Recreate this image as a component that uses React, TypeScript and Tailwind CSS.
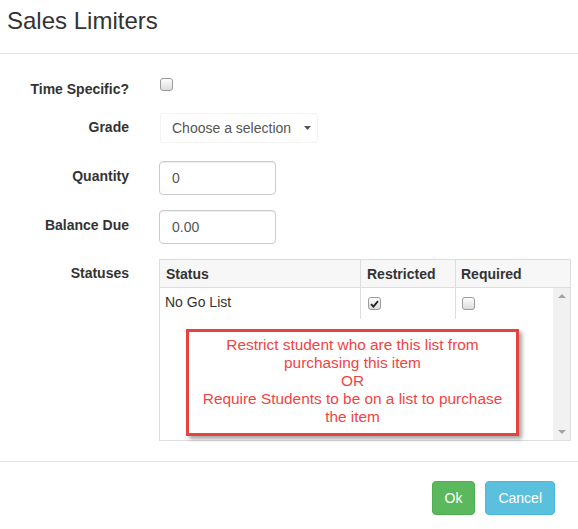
import React from "react";

function Box({ checked = false, className = "" }: { checked?: boolean; className?: string }) {
  return (
    <span
      className={
        "flex h-[13px] w-[13px] items-center justify-center rounded-[3px] border border-[#9a9a9a] bg-gradient-to-b from-[#fdfdfd] to-[#dcdcdc] " +
        className
      }
    >
      {checked && (
        <svg width="9" height="8" viewBox="0 0 9 8">
          <path d="M1 4.2 L3.4 6.6 L8 1.2" fill="none" stroke="#222" strokeWidth="1.8" />
        </svg>
      )}
    </span>
  );
}

function Field({ label, labelTop, children, className = "" }: { label: string; labelTop: string; children: React.ReactNode; className?: string }) {
  return (
    <div className={"flex items-start " + className}>
      <div className={"w-[129px] text-right text-[14px] font-bold leading-[20px] text-[#333] " + labelTop}>{label}</div>
      <div className="ml-[30px]">{children}</div>
    </div>
  );
}

export default function App() {
  return (
    <div className="h-[529px] w-[578px] bg-white font-['Liberation_Sans',Arial,sans-serif] text-[#333]">
      <div className="h-[54px] border-b border-[#e5e5e5] pl-[7px] pt-[8px]">
        <h1 className="text-[24px] leading-[26px]">Sales Limiters</h1>
      </div>

      <div className="pt-[20px]">
        <Field label="Time Specific?" labelTop="mt-[5px]">
          <Box className="mt-[4px] ml-[1px]" />
        </Field>

        <Field label="Grade" labelTop="mt-[4px]" className="mt-[14px]">
          <div className="ml-[1px] flex h-[30px] w-[158px] items-center justify-between rounded-[3px] border border-[#f3f3f3] pl-[11px] pr-[6px] text-[14px] text-[#555]">
            <span>Choose a selection</span>
            <svg width="7" height="4" viewBox="0 0 7 4">
              <path d="M0 0 H7 L3.5 4 Z" fill="#555" />
            </svg>
          </div>
        </Field>

        <Field label="Quantity" labelTop="mt-[5px]" className="mt-[18px]">
          <div className="flex h-[34px] w-[117px] items-center rounded-[4px] border border-[#ccc] px-[12px] text-[14px] text-[#555] shadow-[inset_0_1px_1px_rgba(0,0,0,0.075)]">
            0
          </div>
        </Field>

        <Field label="Balance Due" labelTop="mt-[5px]" className="mt-[15px]">
          <div className="flex h-[34px] w-[117px] items-center rounded-[4px] border border-[#ccc] px-[12px] text-[14px] text-[#555] shadow-[inset_0_1px_1px_rgba(0,0,0,0.075)]">
            0.00
          </div>
        </Field>

        <Field label="Statuses" labelTop="mt-[4px]" className="mt-[15px]">
          <div className="flex h-[182px] w-[412px] flex-col border border-[#ddd]">
            <div className="flex h-[28px] border-b border-[#ddd] bg-[#f7f7f7] text-[14px] font-bold">
              <div className="w-[201px] border-r border-[#ddd] pl-[6px] pt-[4px]">Status</div>
              <div className="w-[95px] border-r border-[#ddd] pl-[6px] pt-[4px]">Restricted</div>
              <div className="flex-1 pl-[5px] pt-[4px]">Required</div>
            </div>
            <div className="flex flex-1">
              <div className="flex-1">
                <div className="flex h-[31px] bg-white text-[14px]">
                  <div className="w-[201px] border-r border-[#ddd] pl-[5px] pt-[4px]">No Go List</div>
                  <div className="flex w-[95px] items-start border-r border-[#ddd] pl-[7px] pt-[9px]">
                    <Box checked />
                  </div>
                  <div className="flex flex-1 items-start pl-[6px] pt-[9px]">
                    <Box />
                  </div>
                </div>
                <div className="ml-[26px] mt-[10px] flex h-[107px] w-[333px] flex-col items-center justify-center border-[3px] border-[#e5433f] bg-white pb-[4px] text-center text-[15.4px] leading-[18px] text-[#f04444] shadow-[3px_3px_4px_rgba(0,0,0,0.35)]">
                  <span>Restrict student who are this list from</span>
                  <span>purchasing this item</span>
                  <span>OR</span>
                  <span>Require Students to be on a list to purchase</span>
                  <span>the item</span>
                </div>
              </div>
              <div className="flex w-[17px] flex-col items-center justify-between bg-[#f1f1f1] py-[6px]">
                <svg width="8" height="4" viewBox="0 0 8 4">
                  <path d="M0 4 H8 L4 0 Z" fill="#a3a3a3" />
                </svg>
                <svg width="8" height="4" viewBox="0 0 8 4">
                  <path d="M0 0 H8 L4 4 Z" fill="#a3a3a3" />
                </svg>
              </div>
            </div>
          </div>
        </Field>
      </div>

      <div className="mt-[20px] flex justify-end gap-[10px] border-t border-[#e5e5e5] pr-[23px] pt-[19px]">
        <button className="h-[34px] rounded-[4px] border border-[#4cae4c] bg-[#5cb85c] px-[12px] text-[14px] text-white">Ok</button>
        <button className="h-[34px] rounded-[4px] border border-[#46b8da] bg-[#5bc0de] px-[12px] text-[14px] text-white">Cancel</button>
      </div>
    </div>
  );
}
